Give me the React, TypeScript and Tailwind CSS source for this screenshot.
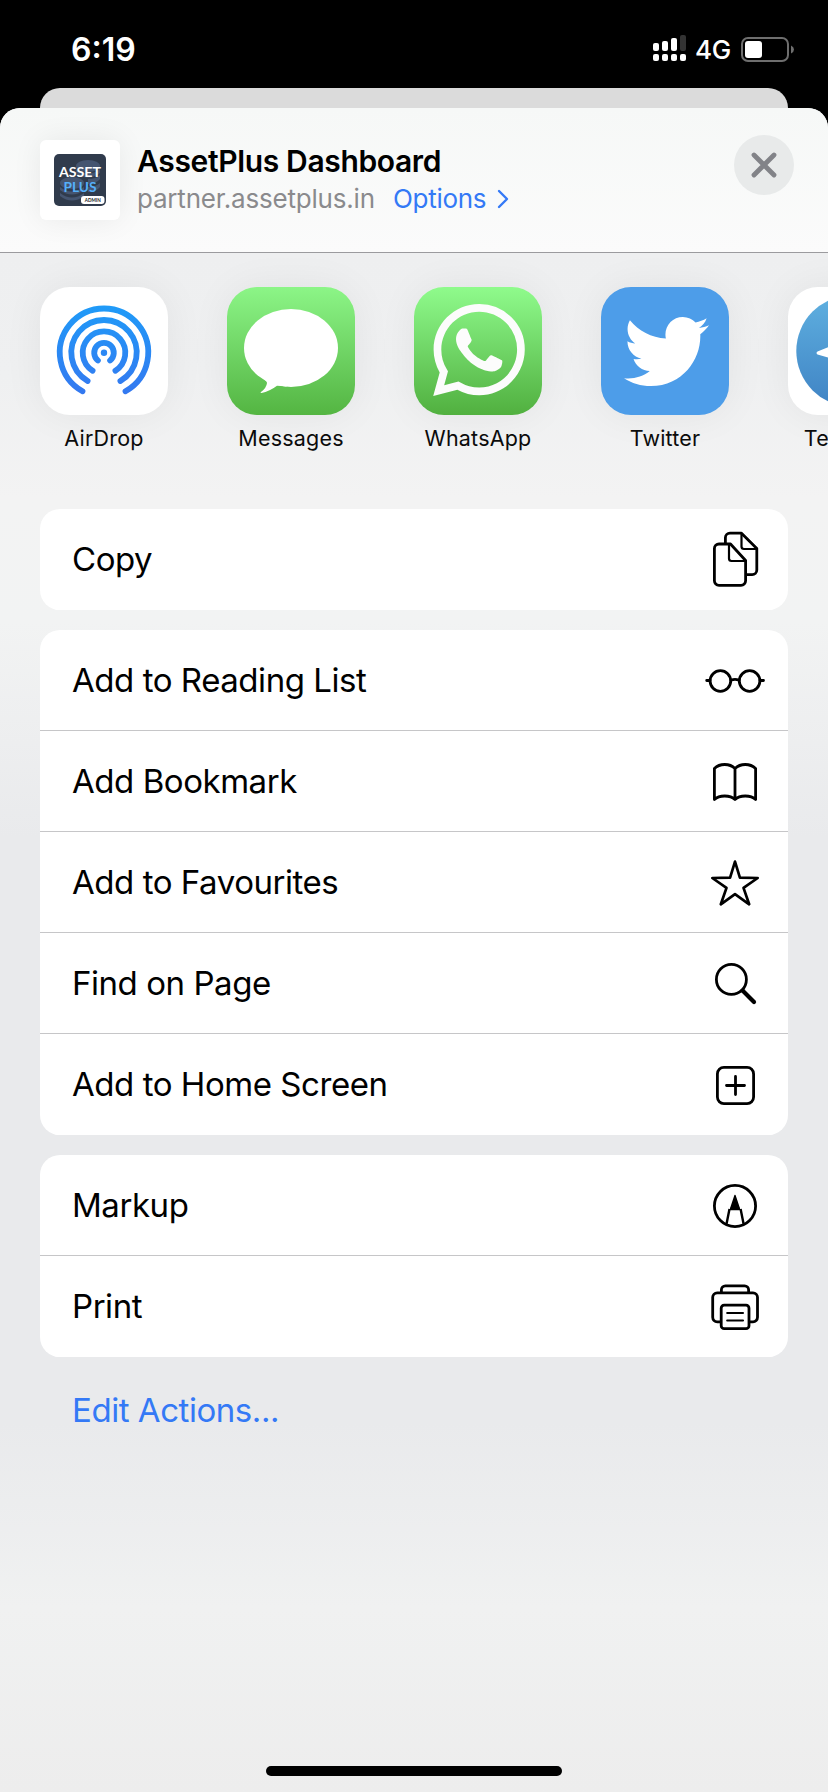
import type { ReactNode } from "react"
import { FaTwitter } from "react-icons/fa"
import { SiWhatsapp } from "react-icons/si"

interface IAction {
    label: string,
    icon: ReactNode
}

const StatusBar = () => {
    return (
        <div className="h-[88px] flex justify-between pl-[71px] pr-[34px] text-white">
            <p className="pt-[30px] text-[32px] leading-[40px] font-semibold">6:19</p>
            <div className="flex pt-[35px]">
                <svg width="34" height="27" viewBox="0 0 34 27" fill="#fff">
                    <rect x="0" y="8" width="6" height="8" rx="2" />
                    <rect x="9" y="6" width="6" height="10" rx="2" />
                    <rect x="18" y="3" width="6" height="13" rx="2" />
                    <rect x="27" y="0" width="6" height="16" rx="2" fill="#333" />
                    <rect x="0" y="19" width="6" height="7" rx="2" />
                    <rect x="9" y="19" width="6" height="7" rx="2" />
                    <rect x="18" y="19" width="6" height="7" rx="2" />
                    <rect x="27" y="19" width="6" height="7" rx="2" />
                </svg>
                <p className="w-[45px] ml-[8px] text-[26px] leading-[30px] font-medium tracking-[-0.3px]">4G</p>
                <svg width="54" height="28" viewBox="0 0 54 28" className="mt-[1px]">
                    <rect x="2" y="2" width="46" height="23" rx="6" fill="none" stroke="#6e6e6e" strokeWidth="2" />
                    <rect x="5" y="5" width="17" height="17" rx="3" fill="#fff" />
                    <path d="M51 9.500Q54 11 54 13.500T51 17.500Z" fill="#6e6e6e" />
                </svg>
            </div>
        </div>
    )
}

const SiteThumb = () => {
    return (
        <div className="w-[80px] h-[80px] shrink-0 rounded-[6px] bg-white p-[14px] shadow-[0_0_30px_rgba(0,0,0,0.07)]">
            <svg width="52" height="52" viewBox="0 0 52 52">
                <rect width="52" height="52" rx="5" fill="#303b4c" />
                <g fill="#455570">
                    <ellipse cx="34" cy="12" rx="12" ry="6" />
                    <path d="M22 15q12 9 24 0v4q-12 9-24 0zM34 25q8 0 12-4v4q-4 5-12 5zM34 33q8 0 12-4v4q-4 5-12 5z" />
                    <ellipse cx="18" cy="29" rx="12" ry="6" />
                    <path d="M6 33q12 9 24 0v3q-12 9-24 0zM6 39q12 9 24 0v3q-12 9-24 0z" />
                </g>
                <text x="26" y="23" textAnchor="middle" textLength="42" lengthAdjust="spacingAndGlyphs" fontFamily="Lato" fontWeight="700" fontSize="12.800" fill="#fff">ASSET</text>
                <text x="26" y="37.500" textAnchor="middle" textLength="33" lengthAdjust="spacingAndGlyphs" fontFamily="Lato" fontWeight="700" fontSize="12.800" fill="#55b0fb">PLUS</text>
                <rect x="27" y="42" width="23.500" height="8" rx="3" fill="#fff" />
                <text x="38.700" y="48.200" textAnchor="middle" textLength="16" lengthAdjust="spacingAndGlyphs" fontFamily="Lato" fontWeight="700" fontSize="5.600" fill="#222">ADMIN</text>
            </svg>
        </div>
    )
}

const Header = () => {
    return (
        <div className="h-[145px] flex pl-[40px] pr-[34px] border-b border-[#9b9b9e] bg-linear-to-b from-[#f6f8f7] to-[#fbfbfb]">
            <div className="pt-[32px]">
                <SiteThumb />
            </div>
            <div className="pt-[33px] pl-[17px] flex-1">
                <p className="text-[30px] leading-[40px] font-semibold tracking-[-0.35px] whitespace-nowrap">AssetPlus Dashboard</p>
                <div className="flex items-center h-[36px] text-[26px] leading-[34px]">
                    <p className="w-[256px] text-[#8a8a8d] tracking-[-0.2px]">partner.assetplus.in</p>
                    <p className="w-[104px] text-[#3479f6] tracking-[-0.3px]">Options</p>
                    <svg width="12" height="20" viewBox="0 0 12 20" fill="none" stroke="#3479f6" strokeWidth="2.400" strokeLinecap="round" strokeLinejoin="round">
                        <path d="M2 2L10 10L2 18" />
                    </svg>
                </div>
            </div>
            <div className="mt-[27px] w-[60px] h-[60px] rounded-full bg-[#e8eaea] flex items-center justify-center">
                <svg width="26" height="26" viewBox="0 0 26 26" stroke="#828388" strokeWidth="4.800" strokeLinecap="round">
                    <path d="M3 3L23 23M23 3L3 23" />
                </svg>
            </div>
        </div>
    )
}

const AirDropIcon = () => {
    return (
        <svg width="128" height="128" viewBox="0 0 128 128" fill="none" stroke="url(#airdrop)" strokeWidth="5.800" strokeLinecap="round">
            <defs>
                <linearGradient id="airdrop" gradientUnits="userSpaceOnUse" x1="0" y1="18" x2="0" y2="108">
                    <stop offset="0" stopColor="#1f9bf8" />
                    <stop offset="1" stopColor="#3478f0" />
                </linearGradient>
            </defs>
            <path d="M42.500 104.300A44.200 44.200 0 1 1 85.500 104.300" />
            <path d="M47.600 94A32.700 32.700 0 1 1 80.400 94" />
            <path d="M52.600 83.700A21.300 21.300 0 1 1 75.400 83.700" />
            <path d="M57.900 73.400A9.800 9.800 0 1 1 70.100 73.400" />
            <circle cx="64" cy="65.700" r="3.200" fill="#2b88f4" stroke="none" />
        </svg>
    )
}

const MessagesIcon = () => {
    return (
        <svg width="128" height="128" viewBox="0 0 128 128" fill="#fff">
            <ellipse cx="64" cy="61" rx="47" ry="39" />
            <path d="M33.700 105.300Q39.500 101 40 96Q40 95 37.500 92.500L46 88L60 99.800Q53 98.200 50 98.800Q42.500 104.500 34.500 106Q33 106 33.700 105.300Z" />
        </svg>
    )
}

const TelegramIcon = () => {
    return (
        <svg width="128" height="128" viewBox="0 0 128 128">
            <defs>
                <linearGradient id="telegram" x1="0" y1="0" x2="0" y2="1">
                    <stop offset="0" stopColor="#5fb0e0" />
                    <stop offset="1" stopColor="#3f83c4" />
                </linearGradient>
            </defs>
            <circle cx="64" cy="64" r="55.700" fill="url(#telegram)" />
            <path d="M29.500 64.500L94 38L84 92L66 79L56 88L52 74L29.500 67.500Q27.500 66 29.500 64.500Z" fill="#fff" />
        </svg>
    )
}

const ShareApps = () => {
    return (
        <div className="h-[256px] pt-[34px] pl-[40px] flex gap-[59px] overflow-hidden">
            <AppItem name="AirDrop" tile="bg-white">
                <AirDropIcon />
            </AppItem>
            <AppItem name="Messages" tile="bg-linear-to-b from-[#8cf587] to-[#54b542]">
                <MessagesIcon />
            </AppItem>
            <AppItem name="WhatsApp" tile="bg-linear-to-b from-[#8ffb8c] to-[#51b03f]">
                <SiWhatsapp className="w-[92px] h-[92px] mt-[17px] ml-[19px] text-[#fcfcfc]" />
            </AppItem>
            <AppItem name="Twitter" tile="bg-[#4d9de9]">
                <FaTwitter className="w-[85px] h-[85px] mt-[22px] ml-[23px] text-white" />
            </AppItem>
            <AppItem name="Telegram" tile="bg-white">
                <TelegramIcon />
            </AppItem>
        </div>
    )
}

const AppItem = (props: { name: string, tile: string, children: ReactNode }) => {
    const { name, tile, children } = props

    return (
        <div className="w-[128px] shrink-0">
            <div className={`w-[128px] h-[128px] rounded-[30px] overflow-hidden shadow-[0_0_40px_rgba(0,0,0,0.06)] ${tile}`}>
                {children}
            </div>
            <p className="mt-[9px] text-[21.500px] leading-[28px] text-center tracking-[0.200px] text-[#0b0b0b]">{name}</p>
        </div>
    )
}

const Glyph = ({ children }: { children: ReactNode }) => (
    <svg width="64" height="64" viewBox="0 0 64 64" fill="none" stroke="#000" strokeWidth="2.800" strokeLinecap="round" strokeLinejoin="round">
        {children}
    </svg>
)

const copyActions: IAction[] = [
    {
        label: "Copy",
        icon: (
            <Glyph>
                <path d="M27.500 17H16a4.600 4.600 0 0 0-4.600 4.600V53.700a4.600 4.600 0 0 0 4.600 4.600H38a4.600 4.600 0 0 0 4.600-4.600V33.500Z" />
                <path d="M26 17.500V31.500a2.500 2.500 0 0 0 2.500 2.500H42.500" strokeWidth="2.200" />
                <path d="M22.400 16V10.800a4.600 4.600 0 0 1 4.600-4.600H38.500L53.800 21.500V43a4.600 4.600 0 0 1-4.600 4.600H44" />
                <path d="M38.500 7V19.500a2.500 2.500 0 0 0 2.500 2.500H53.500" strokeWidth="2.200" />
            </Glyph>
        )
    }
]

const pageActions: IAction[] = [
    {
        label: "Add to Reading List",
        icon: (
            <Glyph>
                <circle cx="17.400" cy="33" r="10.300" />
                <circle cx="46.600" cy="33" r="10.300" />
                <path d="M28 32.300Q32 30.600 36 32.300M3.700 32.500H7M57 32.500H60.500" />
            </Glyph>
        )
    },
    {
        label: "Add Bookmark",
        icon: (
            <Glyph>
                <path d="M32 19.500Q28 15.500 21.700 15.500T11.400 19.500V50.500Q15 47 21.700 47T32 50.500Q35.500 47 42.300 47T52.600 50.500V19.500Q48.500 15.500 42.300 15.500T32 19.500V50" />
            </Glyph>
        )
    },
    {
        label: "Add to Favourites",
        icon: (
            <Glyph>
                <path d="M32 11.600L36.900 27.700L54.700 28L40.500 37.900L46.200 54.300L32 44.200L17.800 54.300L23.500 37.900L9.300 28L27.100 27.700Z" strokeWidth="2.700" />
            </Glyph>
        )
    },
    {
        label: "Find on Page",
        icon: (
            <Glyph>
                <circle cx="28.400" cy="28.400" r="15" />
                <path d="M39.800 39.800L51 51" strokeWidth="4.200" />
            </Glyph>
        )
    },
    {
        label: "Add to Home Screen",
        icon: (
            <Glyph>
                <rect x="14.400" y="15.400" width="36.200" height="36.200" rx="6.500" />
                <path d="M32.500 24.500V42.500M23.500 33.500H41.500" />
            </Glyph>
        )
    }
]

const documentActions: IAction[] = [
    {
        label: "Markup",
        icon: (
            <Glyph>
                <circle cx="32" cy="33" r="20.600" />
                <path d="M26.500 36L23.500 51M37.600 36L40.600 51M27 36H37" strokeWidth="2.400" strokeLinecap="butt" />
                <path d="M32 22.500L27.500 36H36.500Z" fill="#000" strokeWidth="1.400" />
            </Glyph>
        )
    },
    {
        label: "Print",
        icon: (
            <Glyph>
                <path d="M18.400 18V15.800a4 4 0 0 1 4-4H41.600a4 4 0 0 1 4 4V18" />
                <path d="M17 47.800H14.200a4.500 4.500 0 0 1-4.500-4.500V23.300a4.500 4.500 0 0 1 4.500-4.500H50a4.500 4.500 0 0 1 4.500 4.500V43.300a4.500 4.500 0 0 1-4.500 4.500H47" />
                <rect x="18.200" y="31.200" width="27.800" height="23.500" rx="3" />
                <path d="M24.200 39H40M24.200 46.500H40" strokeWidth="2.100" />
            </Glyph>
        )
    }
]

const ActionGroup = ({ actions }: { actions: IAction[] }) => {
    return (
        <div className="rounded-[20px] bg-white overflow-hidden">
            {actions.map((action) => (
                <div key={action.label} className="h-[101px] pl-[32px] pr-[21px] flex items-center justify-between border-b border-[#c6c6c8] last:border-white">
                    <p className="text-[33px] leading-[40px] tracking-[-0.45px]">{action.label}</p>
                    {action.icon}
                </div>
            ))}
        </div>
    )
}

const App = () => {
    return (
        <div className="w-[828px] h-[1792px] bg-black overflow-hidden flex flex-col font-[Inter,sans-serif] text-black">
            <StatusBar />
            {/* Page behind the sheet */}
            <div className="h-[20px] mx-[40px] rounded-t-[20px] bg-[#dbdbdb]"></div>

            {/* Share sheet */}
            <div className="flex-1 flex flex-col rounded-t-[20px] overflow-hidden bg-[#eeeff0]">
                <Header />
                <div className="flex-1 flex flex-col bg-[linear-gradient(180deg,#eeeff0_0%,#eff0f1_8%,#f3f3f3_16%,#f2f3f3_24%,#e9eaec_38%,#e9eaec_76%,#f0f1f1_88%,#ededed_100%)]">
                    <ShareApps />
                    <div className="px-[40px] flex flex-col gap-[20px]">
                        <ActionGroup actions={copyActions} />
                        <ActionGroup actions={pageActions} />
                        <ActionGroup actions={documentActions} />
                    </div>
                    <p className="pt-[33px] pl-[72px] text-[33px] leading-[40px] tracking-[-0.45px] text-[#3479f6]">Edit Actions...</p>
                    <div className="mt-auto mb-[16px] mx-auto w-[296px] h-[10px] rounded-full bg-black"></div>
                </div>
            </div>
        </div>
    )
}

export default App
